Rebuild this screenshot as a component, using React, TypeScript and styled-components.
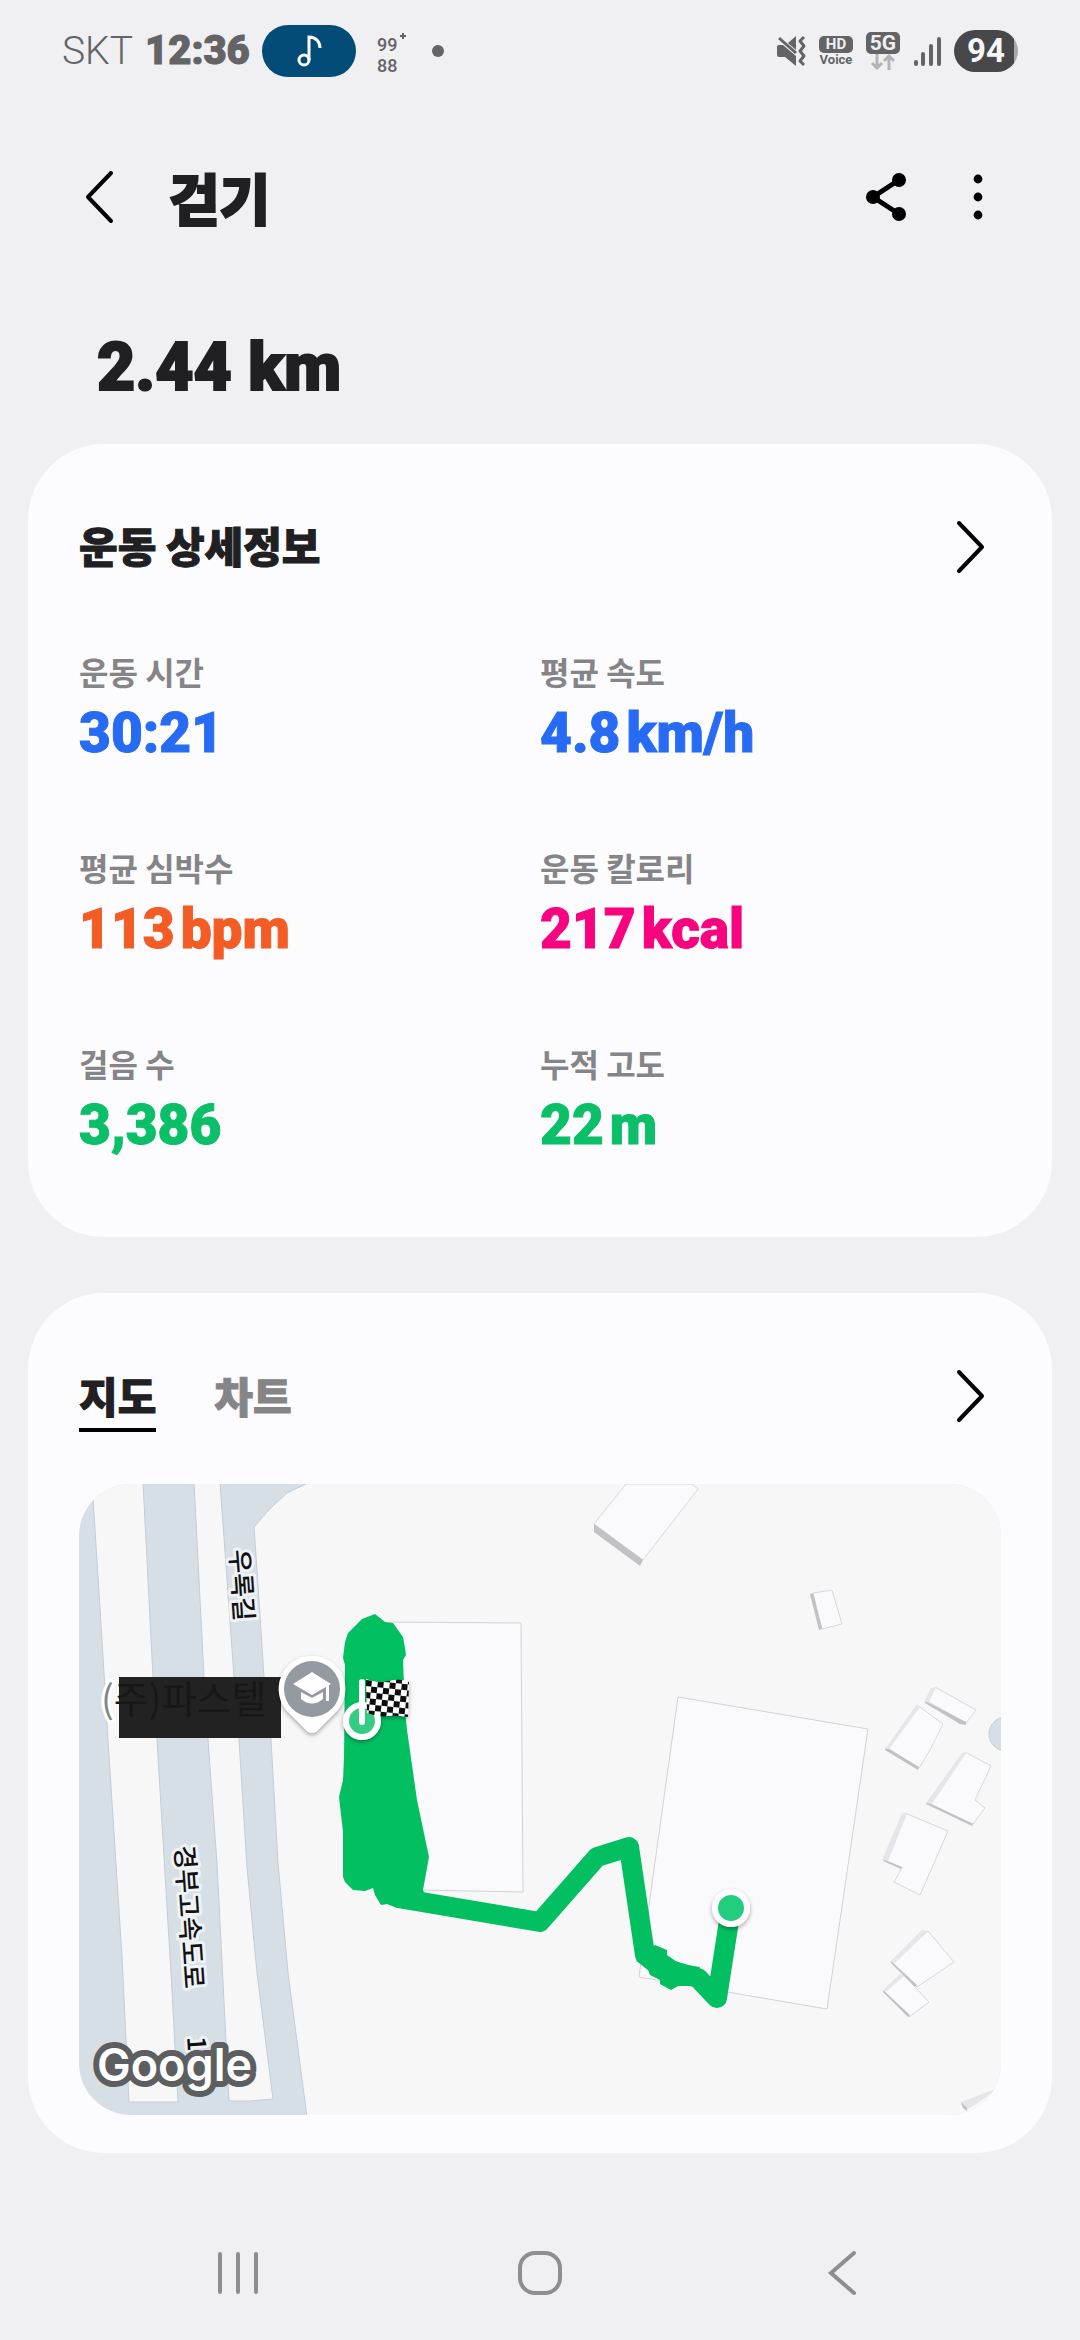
import React from 'react';
import styled, { createGlobalStyle } from 'styled-components';

const sans = `Roboto, "Noto Sans CJK KR", sans-serif`;
const hangul = `"Noto Sans CJK KR", Roboto, sans-serif`;

const GlobalStyle = createGlobalStyle`
  *, *::before, *::after { box-sizing: border-box; }
  body {
    margin: 0;
    background: #f0f0f3;
    color: #202022;
    font-family: ${sans};
  }
  button { margin: 0; padding: 0; border: 0; background: none; color: inherit; font: inherit; cursor: pointer; }
  h1, h2, p, dl, dd { margin: 0; }
  svg { display: block; }
`;

const Screen = styled.div`
  display: flex;
  flex-direction: column;
  min-height: 100vh;
`;

const StatusBar = styled.div`
  display: flex;
  align-items: center;
  justify-content: space-between;
  height: 102px;
  padding: 0 62px;
  color: #646466;
`;

const StatusGroup = styled.div<{ $gap: number }>`
  display: flex;
  align-items: center;
  gap: ${(p) => p.$gap}px;
`;

const Carrier = styled.span`
  font-size: 39px;
  font-weight: 300;
  line-height: 52px;
`;

const Clock = styled.span`
  font-size: 40px;
  font-weight: 900;
  line-height: 52px;
  -webkit-text-stroke: 1px currentColor;
`;

const MusicPill = styled.span`
  display: flex;
  align-items: center;
  justify-content: center;
  width: 94px;
  height: 52px;
  border-radius: 26px;
  background: #044c78;
`;

const StatusStack = styled.span`
  display: flex;
  flex-direction: column;
  align-items: center;
`;

const StatusTag = styled.span<{ $size: number; $height: number }>`
  width: 34px;
  border-radius: 5px;
  background: #646466;
  color: #f0f0f3;
  text-align: center;
  font-size: ${(p) => p.$size}px;
  line-height: ${(p) => p.$height}px;
  font-weight: 700;
`;

const VoiceText = styled.span`
  font-size: 13px;
  font-weight: 700;
  line-height: 14px;
`;

const Battery = styled.span`
  width: 64px;
  height: 42px;
  border-radius: 21px;
  background: linear-gradient(90deg, #48484a 93%, #a9a9ab 93%);
  color: #f6f6f8;
  text-align: center;
  font-size: 33px;
  font-weight: 700;
  line-height: 42px;
`;

const AppBar = styled.header`
  display: flex;
  align-items: center;
  height: 190px;
  padding: 0 72px 0 69px;
`;

const IconButton = styled.button`
  display: flex;
  align-items: center;
  justify-content: center;
  width: 60px;
  height: 72px;
`;

const Title = styled.h1`
  flex: 1;
  padding: 0 0 2px 40px;
  font-family: ${hangul};
  font-size: 55px;
  font-weight: 900;
  line-height: 72px;
  -webkit-text-stroke: 2px currentColor;
`;

const AppActions = styled.div`
  display: flex;
  gap: 32px;
`;

const Distance = styled.p`
  padding: 38px 97px;
  font-size: 66px;
  font-weight: 900;
  line-height: 76px;
  -webkit-text-stroke: 2px currentColor;
`;

const Cards = styled.main`
  display: grid;
  gap: 56px;
  padding: 0 28px;
`;

const Card = styled.section<{ $bottom: number }>`
  padding: 15px 51px ${(p) => p.$bottom}px;
  border-radius: 76px;
  background: #fcfcfe;
`;

const CardHeader = styled.div`
  display: flex;
  align-items: center;
  justify-content: space-between;
  height: 176px;
`;

const CardTitle = styled.h2`
  padding-bottom: 4px;
  font-family: ${hangul};
  font-size: 42px;
  font-weight: 900;
  line-height: 60px;
  -webkit-text-stroke: 1px currentColor;
`;

const Metrics = styled.dl`
  display: grid;
  grid-template-columns: 1fr 1fr;
  row-gap: 76px;
  padding-top: 14px;
`;

const MetricLabel = styled.dt`
  padding-bottom: 4px;
  color: #858587;
  font-family: ${hangul};
  font-size: 32px;
  font-weight: 700;
  line-height: 44px;
`;

const MetricValue = styled.dd<{ $color: string }>`
  display: flex;
  gap: 6px;
  color: ${(p) => p.$color};
  font-size: 55px;
  font-weight: 900;
  line-height: 72px;
  -webkit-text-stroke: 1px currentColor;
`;

const Tabs = styled.div`
  display: flex;
  gap: 58px;
`;

const Tab = styled.button<{ $active?: boolean }>`
  padding: 5px 0 4px;
  border-bottom: 4px solid ${(p) => (p.$active ? '#000' : 'transparent')};
  color: ${(p) => (p.$active ? '#202022' : '#858587')};
  font-family: ${hangul};
  font-size: 42px;
  font-weight: 900;
  line-height: 58px;
  -webkit-text-stroke: 1px currentColor;
`;

const MapFrame = styled.div`
  overflow: hidden;
  border-radius: 52px;
  svg { width: 100%; height: auto; }
`;

const RoadLabel = styled.text`
  fill: #111;
  stroke: #eef2f5;
  stroke-width: 6px;
  stroke-linejoin: round;
  paint-order: stroke;
  font-family: ${hangul};
  font-size: 26px;
  font-weight: 500;
`;

const PlaceLabel = styled.text`
  fill: #171717;
  font-family: ${hangul};
  font-size: 38px;
`;

const PlaceBracket = styled.tspan`
  fill: #858585;
  stroke: #fff;
  stroke-width: 6px;
  paint-order: stroke;
`;

const MapBrand = styled.text`
  fill: #fff;
  stroke: #5c5e60;
  stroke-width: 12px;
  stroke-linejoin: round;
  paint-order: stroke;
  font-family: Inter, sans-serif;
  font-size: 45px;
  font-weight: 600;
`;

const LogoText = styled.text`
  fill: #646466;
  font-size: 18px;
  font-weight: 500;
`;

const NavBar = styled.nav`
  display: grid;
  grid-template-columns: repeat(3, 1fr);
  height: 134px;
  margin-top: auto;
  padding: 0 87px;
`;

const NavButton = styled.button`
  display: flex;
  align-items: center;
  justify-content: center;
`;

function Chevron({ left, color = '#000' }: { left?: boolean; color?: string }) {
  return (
    <svg width="30" height="56" viewBox="0 0 30 56" fill="none" stroke={color} strokeWidth="4" strokeLinecap="round" strokeLinejoin="round">
      <path d={left ? 'M27 4 L4 28 L27 52' : 'M3 4 L26 28 L3 52'} />
    </svg>
  );
}

function MusicIcon() {
  return (
    <svg width="26" height="34" viewBox="0 0 26 34" fill="none" stroke="#fff" strokeWidth="3">
      <circle cx="8" cy="26" r="5" />
      <path d="M13 26 V3 C20 3 24 8 24 14" />
    </svg>
  );
}

function StepsLogo() {
  return (
    <svg width="32" height="52" viewBox="0 0 32 52">
      <LogoText x="1" y="26">99</LogoText>
      <LogoText x="1" y="47">88</LogoText>
      <path d="M27 8 v6 M24 11 h6" stroke="#646466" strokeWidth="2" />
    </svg>
  );
}

function MuteIcon() {
  return (
    <svg width="30" height="32" viewBox="0 0 30 32">
      <path d="M1 12 Q1 10 3 10 H7 L20 21 V31 L9 22 H3 Q1 22 1 20 Z" fill="#646466" />
      <path d="M12 8 L20 1 V15 Z" fill="#646466" />
      <path d="M3 3 L20 18" stroke="#646466" strokeWidth="3" />
      <path d="M28 2 l-4 4 4 5 -4 5 4 5 -4 5 4 4" fill="none" stroke="#646466" strokeWidth="3" strokeLinejoin="round" />
    </svg>
  );
}

function DataArrows() {
  return (
    <svg width="26" height="16" viewBox="0 0 26 16" fill="none" stroke="#b4b4b6" strokeWidth="3">
      <path d="M7 0 V13 M2 9 L7 14 L12 9 M19 16 V3 M14 7 L19 2 L24 7" />
    </svg>
  );
}

function SignalIcon() {
  return (
    <svg width="28" height="32" viewBox="0 0 28 32" stroke="#646466" strokeWidth="4" strokeLinecap="round">
      <path d="M3 27 V29 M10 19 V29 M18 11 V29 M26 4 V29" />
    </svg>
  );
}

function ShareIcon() {
  return (
    <svg width="42" height="50" viewBox="0 0 42 50">
      <path d="M34 8 L8 25 L34 42" fill="none" stroke="#000" strokeWidth="5" />
      <circle cx="34" cy="8" r="7" />
      <circle cx="8" cy="25" r="7" />
      <circle cx="34" cy="42" r="7" />
    </svg>
  );
}

function MoreIcon() {
  return (
    <svg width="10" height="46" viewBox="0 0 10 46">
      <circle cx="5" cy="5" r="4.4" />
      <circle cx="5" cy="23" r="4.4" />
      <circle cx="5" cy="41" r="4.4" />
    </svg>
  );
}

const buildings = [
  { roof: '594,1524 626,1484 692,1484 698,1489 643,1560', side: '594,1524 643,1560 640,1566 594,1532' },
  { roof: '813,1593 832,1590 842,1624 822,1629', side: '810,1594 813,1593 822,1629 819,1630' },
  { roof: '935,1687 976,1710 966,1723 927,1701', side: '925,1701 966,1722 966,1725 960,1724 925,1703' },
  { roof: '917,1705 943,1724 930,1750 919,1768 887,1748', side: '886,1747 919,1767 918,1770 885,1750' },
  { roof: '965,1752 991,1766 975,1800 985,1808 973,1824 928,1803', side: '927,1802 973,1824 972,1826 926,1804' },
  { roof: '905,1813 948,1831 920,1895 894,1882 902,1868 883,1860', side: '883,1859 902,1867 901,1869 883,1861' },
  { roof: '928,1931 954,1962 917,1987 892,1962', side: '891,1961 917,1985 915,1987 891,1963' },
  { roof: '903,1975 915,1987 929,2002 909,2017 884,1991', side: '883,1990 910,2015 908,2017 883,1992' },
];

const shadedWalls = [
  '917,1705 920,1707 889,1749 885,1749',
  '962,1753 967,1752 932,1804 926,1803',
  '902,1813 907,1814 888,1861 882,1860',
  '922,1930 928,1931 895,1963 890,1962',
  '900,1974 904,1976 887,1991 882,1991',
  '931,1688 936,1687 929,1702 924,1702',
  '961,2102 990,2091 1001,2087 967,2110',
];

function RouteMap() {
  return (
    <svg viewBox="79 1484 922 631" role="img" aria-label="지도">
      <defs>
        <pattern id="checker" width="12" height="12" patternUnits="userSpaceOnUse" patternTransform="translate(366 1680) rotate(6)">
          <rect width="12" height="12" fill="#fff" />
          <rect width="6" height="6" fill="#111" />
          <rect x="6" y="6" width="6" height="6" fill="#111" />
        </pattern>
        <filter id="shade" x="-30%" y="-30%" width="160%" height="160%">
          <feDropShadow dx="0" dy="2" stdDeviation="2" floodColor="#000" floodOpacity="0.35" />
        </filter>
      </defs>

      <rect x="79" y="1484" width="922" height="631" fill="#d7dfe6" />
      <g fill="#f7f7f7" stroke="#c3ccd6" strokeWidth="1">
        <path d="M92 1482 L102 1640 108 1740 122 1957 129 2102 H178 L172 1990 157 1740 153 1677 143 1482 Z" />
        <path d="M194 1482 L204 1677 208 1740 217 1863 229 2101 H250 L273 2099 257 1973 247 1867 239 1740 234 1677 220 1482 Z" />
        <path d="M310 1482 L287 1493 Q268 1509 254 1527 L257 1570 264 1677 271 1740 278 1863 288 1973 307 2117 H1003 V1482 Z" />
      </g>

      <g fill="#fafafc" stroke="#d2d2d5" strokeWidth="1">
        <path d="M390 1622 L521 1623 523 1892 420 1890 Z" />
        <path d="M678 1697 L868 1729 827 2009 639 1977 Z" />
      </g>
      {buildings.map((b) => (
        <g key={b.roof}>
          <polygon points={b.roof} fill="#fafafc" stroke="#d8d8dc" strokeWidth="1" />
          <polygon points={b.side} fill="#c2c2c5" />
        </g>
      ))}
      {shadedWalls.map((w) => (
        <polygon key={w} points={w} fill="#e6e6ea" />
      ))}
      <path d="M961 2102 L967 2108 967 2111 963 2108 Z" fill="#c2c2c5" />
      <circle cx="1006" cy="1734" r="17" fill="#d7dfe6" stroke="#c3ccd6" />

      <RoadLabel transform="translate(230 1550) rotate(86)">우록길</RoadLabel>
      <RoadLabel transform="translate(175 1846) rotate(86)">경부고속도로</RoadLabel>
      <RoadLabel transform="translate(187 2037) rotate(86)">1</RoadLabel>

      <rect x="119" y="1677" width="162" height="61" fill="#222" />
      <PlaceLabel x="101" y="1713">
        <PlaceBracket>(</PlaceBracket>주)파스텔
      </PlaceLabel>

      <g fill="#02bf62">
        <path d="M375 1614 L362 1619 348 1633 345 1642 343 1658 345 1665 344 1757 343 1780 339 1797 343 1832 343 1877 345 1882 353 1890 365 1891 373 1888 375 1895 381 1905 387 1904 397 1908 425 1895 423 1890 429 1857 417 1800 407 1730 405 1710 403 1660 406 1655 405 1648 403 1637 393 1623 385 1622 Z" />
        <path d="M655 1945 L667 1950 667 1955 680 1964 700 1967 690 1986 678 1986 671 1990 660 1984 660 1980 650 1975 647 1967 636 1961 Z" />
        <path
          d="M398 1898 L540 1922 597 1857 629 1847 645 1955 660 1967 698 1978 717 1998 731 1908"
          fill="none"
          stroke="#02bf62"
          strokeWidth="20"
          strokeLinejoin="round"
        />
      </g>

      <g filter="url(#shade)">
        <path d="M312 1656 A33 33 0 0 1 336 1712 L317 1731 Q312 1735 307 1731 L288 1712 A33 33 0 0 1 312 1656 Z" fill="#fff" />
      </g>
      <circle cx="312" cy="1689" r="28" fill="#9499a2" />
      <g fill="#fff">
        <path d="M312 1672 L331 1684 312 1695 293 1684 Z" />
        <path d="M301 1692 L312 1698 323 1692 V1699 Q312 1708 301 1699 Z" />
        <path d="M326 1685 L329 1684 V1701 H326 Z" />
      </g>

      <g filter="url(#shade)">
        <circle cx="362" cy="1721" r="16" fill="#34cb83" stroke="#fff" strokeWidth="6" />
        <path d="M366 1679 Q378 1684 389 1681 T409 1682 L408 1717 Q397 1715 387 1716 T367 1713 Z" fill="url(#checker)" />
      </g>
      <path d="M362 1682 V1722" stroke="#fff" strokeWidth="6" strokeLinecap="round" />

      <g filter="url(#shade)">
        <circle cx="731" cy="1908" r="16" fill="#22ce7d" stroke="#fff" strokeWidth="6" />
      </g>

      <MapBrand x="97" y="2081">Google</MapBrand>
    </svg>
  );
}

const metrics = [
  { label: '운동 시간', value: '30:21', unit: '', color: '#276bf5' },
  { label: '평균 속도', value: '4.8', unit: 'km/h', color: '#276bf5' },
  { label: '평균 심박수', value: '113', unit: 'bpm', color: '#f45c25' },
  { label: '운동 칼로리', value: '217', unit: 'kcal', color: '#f8037f' },
  { label: '걸음 수', value: '3,386', unit: '', color: '#0abf67' },
  { label: '누적 고도', value: '22', unit: 'm', color: '#0abf67' },
];

export default function App() {
  return (
    <Screen>
      <GlobalStyle />
      <StatusBar>
        <StatusGroup $gap={20}>
          <StatusGroup $gap={12}>
            <Carrier>SKT</Carrier>
            <Clock>12:36</Clock>
            <MusicPill><MusicIcon /></MusicPill>
          </StatusGroup>
          <StepsLogo />
          <svg width="20" height="12" viewBox="0 0 20 12">
            <circle cx="10" cy="6" r="6" fill="#646466" />
          </svg>
        </StatusGroup>
        <StatusGroup $gap={13}>
          <MuteIcon />
          <StatusStack>
            <StatusTag $size={15} $height={17}>HD</StatusTag>
            <VoiceText>Voice</VoiceText>
          </StatusStack>
          <StatusStack>
            <StatusTag $size={21} $height={22}>5G</StatusTag>
            <DataArrows />
          </StatusStack>
          <SignalIcon />
          <Battery>94</Battery>
        </StatusGroup>
      </StatusBar>

      <AppBar>
        <IconButton aria-label="뒤로"><Chevron left /></IconButton>
        <Title>걷기</Title>
        <AppActions>
          <IconButton aria-label="공유"><ShareIcon /></IconButton>
          <IconButton aria-label="더보기"><MoreIcon /></IconButton>
        </AppActions>
      </AppBar>

      <Distance>2.44 km</Distance>

      <Cards>
        <Card $bottom={76}>
          <CardHeader>
            <CardTitle>운동 상세정보</CardTitle>
            <IconButton aria-label="운동 상세정보 보기"><Chevron /></IconButton>
          </CardHeader>
          <Metrics>
            {metrics.map((m) => (
              <div key={m.label}>
                <MetricLabel>{m.label}</MetricLabel>
                <MetricValue $color={m.color}>
                  <span>{m.value}</span>
                  {m.unit && <span>{m.unit}</span>}
                </MetricValue>
              </div>
            ))}
          </Metrics>
        </Card>

        <Card $bottom={38}>
          <CardHeader>
            <Tabs>
              <Tab $active aria-pressed="true">지도</Tab>
              <Tab aria-pressed="false">차트</Tab>
            </Tabs>
            <IconButton aria-label="지도 보기"><Chevron /></IconButton>
          </CardHeader>
          <MapFrame><RouteMap /></MapFrame>
        </Card>
      </Cards>

      <NavBar>
        <NavButton aria-label="최근 앱">
          <svg width="44" height="44" viewBox="0 0 44 44" stroke="#8e8e90" strokeWidth="4" strokeLinecap="round">
            <path d="M4 3 V41 M22 3 V41 M40 3 V41" />
          </svg>
        </NavButton>
        <NavButton aria-label="홈">
          <svg width="46" height="46" viewBox="0 0 46 46" fill="none" stroke="#8e8e90" strokeWidth="4">
            <rect x="3" y="3" width="40" height="40" rx="15" />
          </svg>
        </NavButton>
        <NavButton aria-label="뒤로">
          <svg width="30" height="46" viewBox="0 0 30 46" fill="none" stroke="#8e8e90" strokeWidth="4" strokeLinecap="round">
            <path d="M27 3 L4 23 L27 43" />
          </svg>
        </NavButton>
      </NavBar>
    </Screen>
  );
}
